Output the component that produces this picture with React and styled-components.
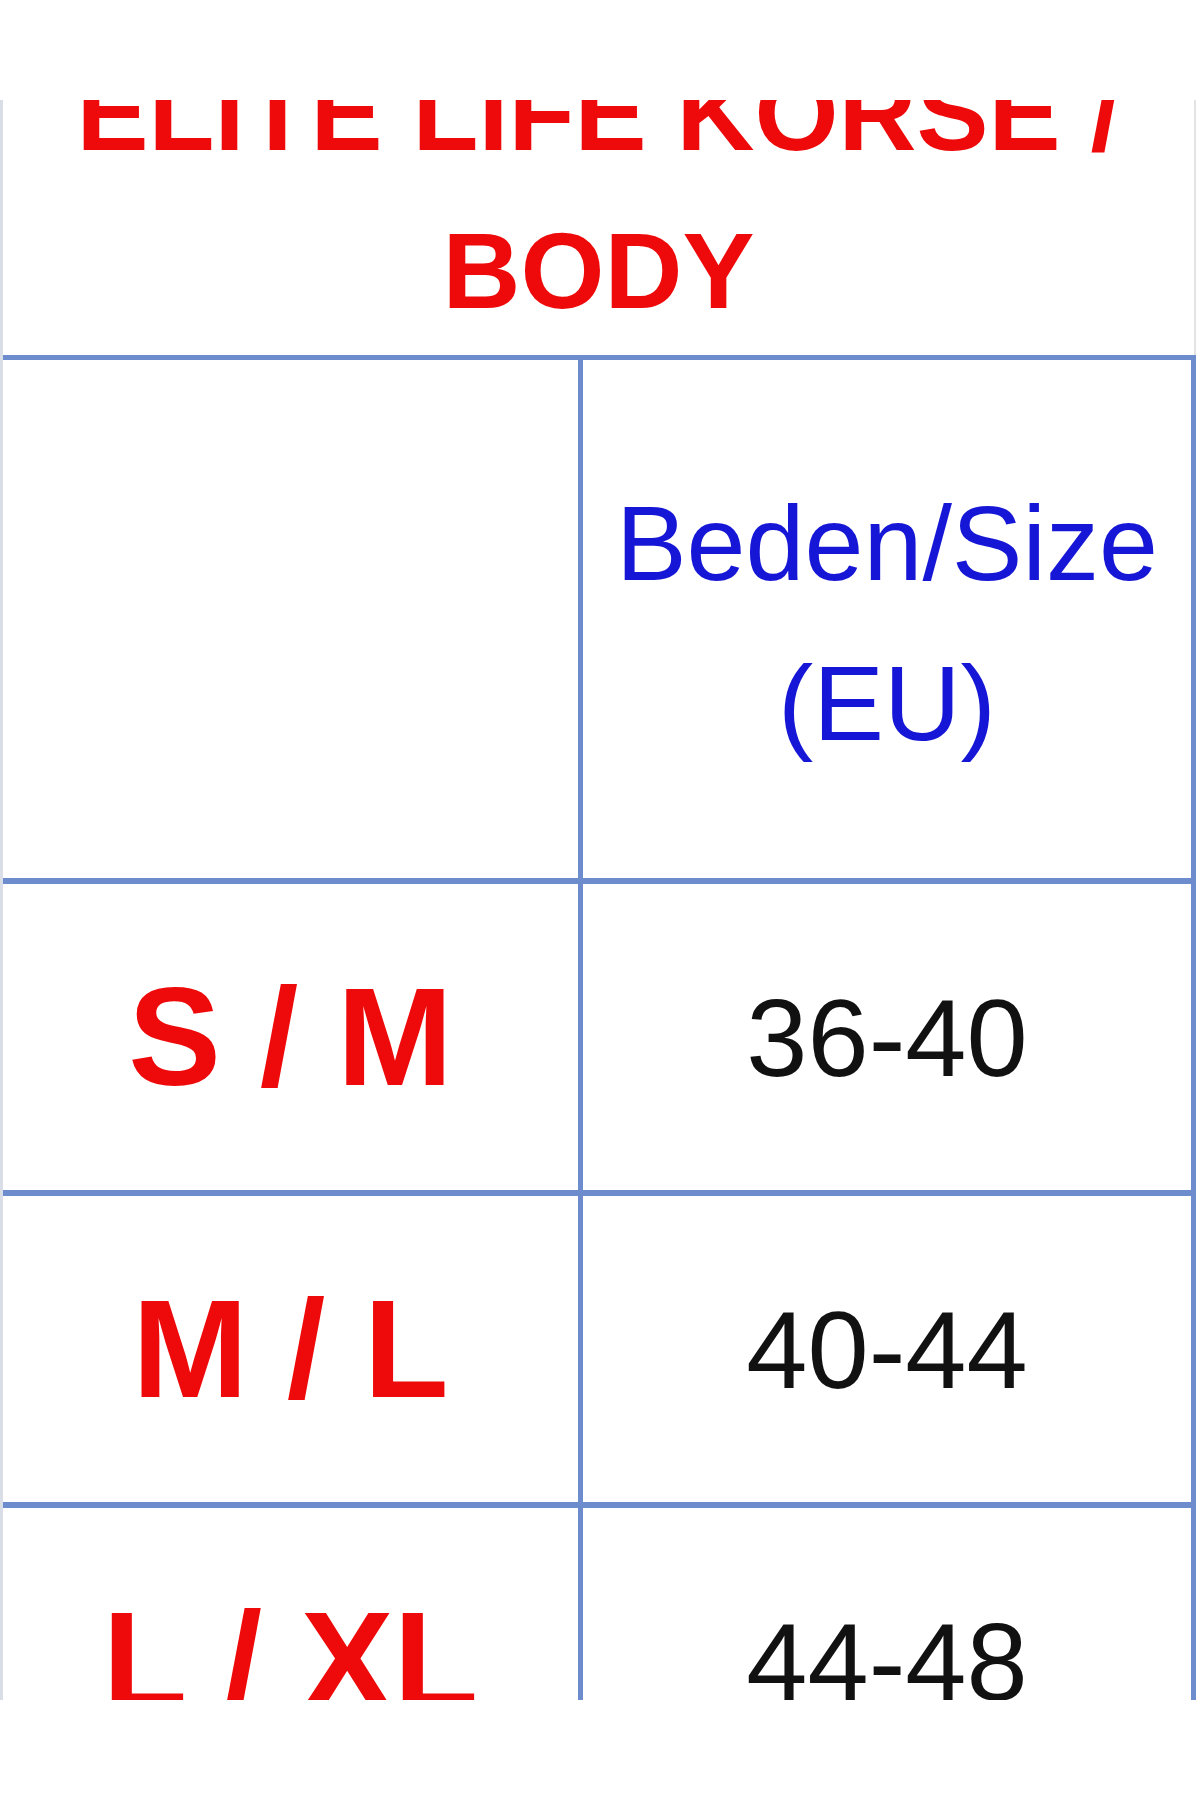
import React from 'react';
import styled, { createGlobalStyle } from 'styled-components';

const GlobalStyle = createGlobalStyle`
  html, body {
    margin: 0;
    padding: 0;
    background: #ffffff;
  }
  body {
    font-family: "Liberation Sans", Arial, sans-serif;
  }
`;

const border = '#6d8ccd';

const Page = styled.div`
  width: 1200px;
  height: 1800px;
  background: #fff;
  padding-top: 100px;
  box-sizing: border-box;
`;

const Frame = styled.div`
  width: 1196px;
  height: 1600px;
  overflow: hidden;
  border-left: 3px solid #d9dee6;
  box-sizing: border-box;
`;

const Title = styled.h1`
  margin: -66px 0 0;
  padding-bottom: 5px;
  border-right: 2px solid #e3e3e3;
  font-size: 108px;
  line-height: 158px;
  font-weight: 700;
  text-align: center;
  color: #ee0a0a;
`;

const SizeTable = styled.div`
  display: grid;
  grid-template-columns: 575px 608px;
  grid-template-rows: 518px repeat(3, 306px);
  column-gap: 5px;
  row-gap: 6px;
  background: ${border};
  border-top: 5px solid ${border};
  border-right: 5px solid ${border};
`;

const Cell = styled.div`
  background: #fff;
  display: flex;
  align-items: center;
  justify-content: center;
  text-align: center;
`;

const HeadText = styled.div`
  padding-top: 8px;
  color: #1616d6;
  font-size: 106px;
  line-height: 160px;
`;

const SizeLabel = styled.span`
  color: #ee0a0a;
  font-size: 139px;
  font-weight: 700;
`;

const Range = styled.span`
  color: #111;
  font-size: 110px;
`;

const rows = [
  ['S / M', '36-40'],
  ['M / L', '40-44'],
  ['L / XL', '44-48'],
];

export default function App() {
  return (
    <Page>
      <GlobalStyle />
      <Frame>
        <Title>
          ELITE LIFE KORSE /<br />BODY
        </Title>
        <SizeTable>
          <Cell />
          <Cell>
            <HeadText>
              Beden/Size<br />(EU)
            </HeadText>
          </Cell>
          {rows.map(([size, range]) => (
            <React.Fragment key={size}>
              <Cell>
                <SizeLabel>{size}</SizeLabel>
              </Cell>
              <Cell>
                <Range>{range}</Range>
              </Cell>
            </React.Fragment>
          ))}
        </SizeTable>
      </Frame>
    </Page>
  );
}
